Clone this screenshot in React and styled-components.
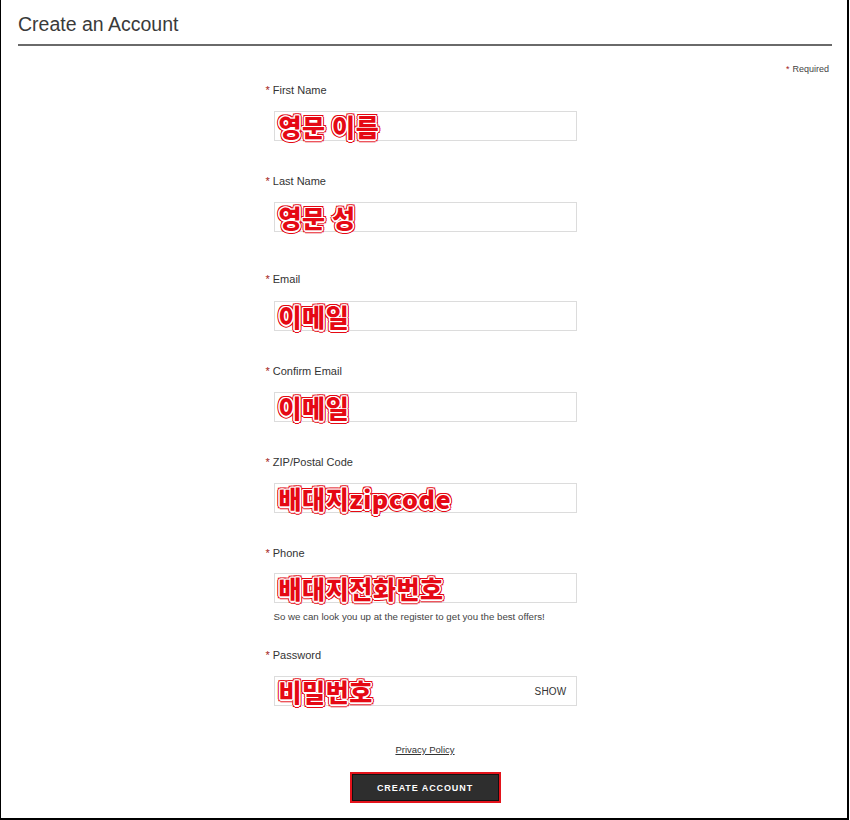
import React from "react";
import styled, { createGlobalStyle } from "styled-components";

const Global = createGlobalStyle`
  html, body { margin: 0; padding: 0; background: #fff; }
  body { font-family: "Liberation Sans", Arial, sans-serif; color: #333; }
  * { box-sizing: border-box; }
`;

const Page = styled.div`
  width: 849px;
  height: 820px;
  border-left: 1px solid #000;
  border-right: 2px solid #000;
  border-bottom: 2px solid #000;
  background: #fff;
  display: flex;
  flex-direction: column;
`;

const Header = styled.div`
  margin: 0 15px 0 17px;
  padding-top: 12px;
  border-bottom: 2px solid #6a6a6a;
`;

const Title = styled.h1`
  margin: 0 0 8px 0;
  font-family: "Liberation Sans", Arial, sans-serif;
  font-weight: normal;
  font-size: 19.5px;
  line-height: 24px;
  color: #3a3a3a;
`;

const RequiredRow = styled.div`
  margin-top: 17px;
  padding-right: 18px;
  text-align: right;
  font-size: 9px;
  line-height: 12px;
  color: #444;
`;

const Star = styled.span`
  color: #a31919;
  margin-right: 3px;
`;

const Form = styled.div`
  width: 303px;
  margin: 0 auto;
  position: relative;
  left: 1px;
  display: flex;
  flex-direction: column;
`;

const Field = styled.div`
  margin-top: ${(p) => p.$top}px;
  display: flex;
  flex-direction: column;
`;

const Label = styled.label`
  margin-left: -8px;
  font-size: 11px;
  line-height: 14px;
  color: #333;
  margin-bottom: ${(p) => p.$gap ?? 14}px;
`;

const InputBox = styled.div`
  height: 30px;
  border: 1px solid #dcdcdc;
  display: flex;
  align-items: center;
  justify-content: space-between;
  padding: 0 9px 0 4px;
  background: #fff;
`;

const Note = styled.span`
  font-family: "Noto Sans CJK KR", "Liberation Sans", sans-serif;
  font-weight: 900;
  font-size: 25px;
  line-height: 28px;
  color: #e50914;
  letter-spacing: 0.6px;
  white-space: nowrap;
  text-shadow:
    -1px -1px 0 #fff, 1px -1px 0 #fff, -1px 1px 0 #fff, 1px 1px 0 #fff,
    0 -1.5px 0 #fff, 0 1.5px 0 #fff, -1.5px 0 0 #fff, 1.5px 0 0 #fff,
    -2px -2px 0 #e50914, 2px -2px 0 #e50914, -2px 2px 0 #e50914, 2px 2px 0 #e50914,
    0 -2.5px 0 #e50914, 0 2.5px 0 #e50914, -2.5px 0 0 #e50914, 2.5px 0 0 #e50914;
`;

const Show = styled.span`
  font-size: 10px;
  color: #333;
  letter-spacing: 0.2px;
`;

const Help = styled.div`
  margin-top: 8px;
  font-size: 9.7px;
  line-height: 12px;
  color: #444;
  white-space: nowrap;
`;

const Privacy = styled.a`
  margin-top: 37px;
  align-self: center;
  font-size: 9.5px;
  line-height: 14px;
  color: #333;
  text-decoration: underline;
`;

const ButtonWrap = styled.div`
  margin-top: 15px;
  align-self: center;
  border: 2px solid #e3131b;
  display: flex;
`;

const Button = styled.button`
  width: 147px;
  height: 27px;
  background: #2e2e2e;
  border: 1px solid #111;
  color: #fff;
  font-family: "Liberation Sans", Arial, sans-serif;
  font-weight: bold;
  font-size: 9px;
  letter-spacing: 0.9px;
  padding: 0;
  cursor: pointer;
`;

const fields = [
  { label: "First Name", note: "영문 이름", top: 8 },
  { label: "Last Name", note: "영문 성", top: 33 },
  { label: "Email", note: "이메일", top: 40, gap: 15 },
  { label: "Confirm Email", note: "이메일", top: 33 },
  { label: "ZIP/Postal Code", note: "배대지zipcode", top: 33 },
  {
    label: "Phone",
    note: "배대지전화번호",
    top: 33,
    gap: 13,
    help: "So we can look you up at the register to get you the best offers!",
  },
  { label: "Password", note: "비밀번호", top: 25, show: true },
];

export default function App() {
  return (
    <>
      <Global />
      <Page>
        <Header>
          <Title>Create an Account</Title>
        </Header>
        <RequiredRow>
          <Star>*</Star>Required
        </RequiredRow>
        <Form>
          {fields.map((f) => (
            <Field key={f.label} $top={f.top}>
              <Label $gap={f.gap}>
                <Star>*</Star>
                {f.label}
              </Label>
              <InputBox>
                <Note>{f.note}</Note>
                {f.show && <Show>SHOW</Show>}
              </InputBox>
              {f.help && <Help>{f.help}</Help>}
            </Field>
          ))}
          <Privacy>Privacy Policy</Privacy>
          <ButtonWrap>
            <Button>CREATE ACCOUNT</Button>
          </ButtonWrap>
        </Form>
      </Page>
    </>
  );
}
